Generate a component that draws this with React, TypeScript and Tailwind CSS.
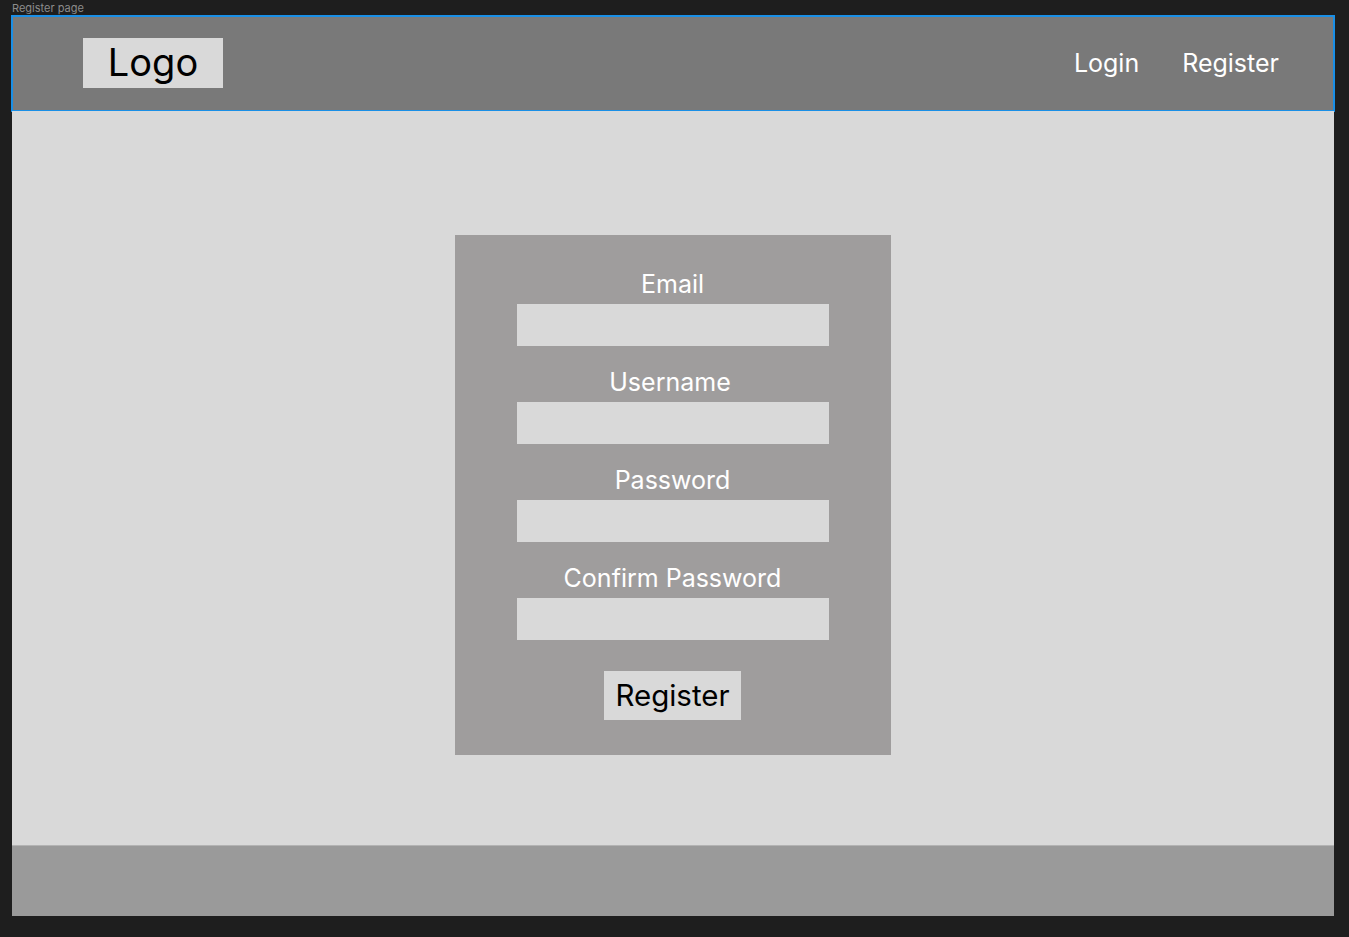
const fields = ['Email', 'Username', 'Password', 'Confirm Password'];

export default function App() {
  return (
    <div className="min-h-screen bg-[#1e1e1e] px-[12px] pb-[21px] font-['Inter',sans-serif]">
      <div className="h-[16px] pt-[1px] text-[11px] leading-[14px] text-[#8c8c8c]">Register page</div>
      <div className="w-[1322px] h-[900px] flex flex-col">
        {/* header */}
        <header className="h-[95px] bg-[#797979] outline-2 outline-[#1a8fe6] -outline-offset-1 flex items-center justify-between pl-[71px] pr-[55px]">
          <div className="w-[140px] h-[50px] -mt-[2px] bg-[#d9d9d9] flex items-center justify-center pb-[2px] text-[38px] leading-none text-black">
            Logo
          </div>
          <nav className="flex items-center gap-[43px] text-[25px] text-white">
            <a>Login</a>
            <a>Register</a>
          </nav>
        </header>

        {/* main */}
        <main className="flex-1 bg-[#d9d9d9] flex justify-center pt-[124px]">
          <form className="w-[436px] h-[520px] bg-[#9f9d9d] flex flex-col items-center pt-[35px] pr-[1px]">
            {fields.map((f, i) => (
              <div key={f} className={`flex flex-col items-center ${i > 0 ? 'mt-[22px]' : ''}`}>
                <label className={`text-[25px] leading-[29px] text-white ${f === 'Username' ? 'mr-[5px]' : ''}`}>{f}</label>
                <input
                  type={f.includes('Password') ? 'password' : 'text'}
                  className="mt-[5px] w-[312px] h-[42px] bg-[#d9d9d9] outline-none"
                />
              </div>
            ))}
            <button
              type="button"
              className="mt-[31px] w-[137px] h-[49px] bg-[#d9d9d9] text-[29.5px] leading-none text-black"
            >
              Register
            </button>
          </form>
        </main>

        {/* footer */}
        <footer className="h-[71px] bg-[#9a9a9a] border-t border-[#b3b3b3]" />
      </div>
    </div>
  );
}
